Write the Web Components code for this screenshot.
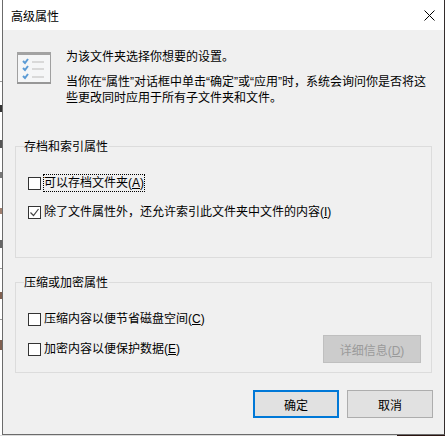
<!DOCTYPE html>
<html lang="zh">
<head>
<meta charset="utf-8">
<title>高级属性</title>
<style>
html, body { margin: 0; height: 100%; overflow: hidden; }
body {
	font: 12px "Liberation Sans", "Noto Sans CJK SC", sans-serif;
	color: #000;
	/* bits of the window behind the dialog, left strip and bottom row */
	background:
		linear-gradient(#999, #999) 0 81px / 2px 1px no-repeat,
		linear-gradient(#999, #999) 0 268px / 2px 1px no-repeat,
		linear-gradient(#999, #999) 0 319px / 2px 1px no-repeat,
		linear-gradient(#333, #333) 0 105px / 2px 7px no-repeat,
		linear-gradient(#555, #555) 0 140px / 2px 8px no-repeat,
		linear-gradient(#777, #777) 0 172px / 2px 6px no-repeat,
		linear-gradient(#a08070, #a08070) 0 208px / 2px 6px no-repeat,
		linear-gradient(#666, #666) 0 240px / 2px 8px no-repeat,
		linear-gradient(#806050, #806050) 0 292px / 2px 7px no-repeat,
		linear-gradient(#806050, #806050) 0 340px / 2px 10px no-repeat,
		linear-gradient(#2a1410, #2a1410) 397px 435px / 48px 1px no-repeat,
		linear-gradient(#dcdcdc, #dcdcdc) 0 435px / 397px 1px no-repeat,
		#fff;
}
</style>
</head>
<body>
<win-dialog caption="高级属性">
	<div slot="intro">
		<p>为该文件夹选择你想要的设置。</p>
		<p>当你在“属性”对话框中单击“确定”或“应用”时，系统会询问你是否将这些更改同时应用于所有子文件夹和文件。</p>
	</div>
	<group-box label="存档和索引属性" gap="11" style="height:112px">
		<check-option key="A" focused>可以存档文件夹</check-option>
		<check-option key="I" checked>除了文件属性外，还允许索引此文件夹中文件的内容</check-option>
	</group-box>
	<group-box label="压缩或加密属性" gap="12" style="height:91px;margin-top:24px">
		<check-option key="C">压缩内容以便节省磁盘空间</check-option>
		<div style="display:flex;justify-content:space-between;align-items:flex-start">
			<check-option key="E">加密内容以便保护数据</check-option>
			<win-button disabled key="D" style="width:98px;height:28px;margin:-5px 10px 0 0">详细信息</win-button>
		</div>
	</group-box>
	<win-button slot="actions" primary style="width:86px;height:28px">确定</win-button>
	<win-button slot="actions" style="width:86px;height:28px">取消</win-button>
</win-dialog>
<script>
class WinDialog extends HTMLElement {
	connectedCallback() {
		let shadow = this.attachShadow({mode: "open"});
		shadow.innerHTML = `
			<style>
				:host {
					display: flex;
					flex-direction: column;
					box-sizing: border-box;
					width: 443px;
					height: 435px;
					margin-left: 2px;
					border: 1px solid #6b6b6b;
					border-top: 0;
					border-right-color: #332c2c;
					background: #f0f0f0;
				}
				#title {
					display: flex;
					justify-content: space-between;
					align-items: center;
					height: 30px;
					padding: 0 9px 0 8px;
					background: #fff;
				}
				#title svg { width: 11px; height: 11px; }
				#body { flex: 1; padding: 19px 11px 0 12px; }
				#head { display: flex; height: 97px; }
				#head svg { width: 34px; height: 32px; margin: 3px 15px 0 2px; flex: none; }
				#actions { display: flex; justify-content: flex-end; gap: 8px; padding: 17px 0 0 0; }
				::slotted([slot=intro]) { line-height: 16px; }
			</style>
			<div id="title">
				<span>${this.getAttribute("caption")}</span>
				<svg viewBox="0 0 11 11"><path d="M.5.5l10 10M10.5.5l-10 10" stroke="#000" fill="none"/></svg>
			</div>
			<div id="body">
				<div id="head">
					<svg viewBox="0 0 34 32">
						<rect x=".5" y=".5" width="33" height="31" fill="#f5f6f7" stroke="#a0a0a0"/>
						<rect x="0" y="0" width="34" height="3" fill="#a3a3a3"/>
						<rect x="0" y="30" width="34" height="2" fill="#979797"/>
						<path d="M15 10h12M15 17h12M15 25h12" stroke="#cfcfcf" stroke-width="1.5"/>
						<path d="M6 9l2 2 3-4M6 16l2 2 3-4M6 24l2 2 3-4" stroke="#5b9bd5" stroke-width="2" fill="none"/>
					</svg>
					<slot name="intro"></slot>
				</div>
				<slot></slot>
				<div id="actions"><slot name="actions"></slot></div>
			</div>
		`;
		for (let p of this.querySelectorAll("p")) p.style.margin = "0 0 9px";
	}
}
customElements.define("win-dialog", WinDialog);

class GroupBox extends HTMLElement {
	connectedCallback() {
		let shadow = this.attachShadow({mode: "open"});
		shadow.innerHTML = `
			<style>
				:host {
					display: block;
					box-sizing: border-box;
					width: 417px;
					border: 1px solid #dcdcdc;
					position: relative;
				}
				#label {
					position: absolute;
					left: 8px;
					top: -8px;
					line-height: 16px;
					background: #f0f0f0;
					padding-right: 1px;
				}
				#content {
					display: flex;
					flex-direction: column;
					gap: ${this.getAttribute("gap")}px;
					padding: 27px 0 0 12px;
				}
			</style>
			<span id="label">${this.getAttribute("label")}</span>
			<div id="content"><slot></slot></div>
		`;
	}
}
customElements.define("group-box", GroupBox);

class CheckOption extends HTMLElement {
	connectedCallback() {
		let shadow = this.attachShadow({mode: "open"});
		let checked = this.hasAttribute("checked");
		let focused = this.hasAttribute("focused");
		shadow.innerHTML = `
			<style>
				:host { display: flex; align-items: flex-start; height: 18px; }
				#box {
					box-sizing: border-box;
					width: 13px;
					height: 13px;
					margin-top: 3px;
					border: 1px solid #333;
					background: #fff;
					flex: none;
					display: flex;
				}
				#box svg { width: 11px; height: 11px; }
				#text { margin-left: 2px; padding: 0 1px; line-height: 18px; white-space: nowrap; }
				#text.focused { outline: 1px dotted #000; outline-offset: -1px; }
				u { text-underline-offset: 1px; }
			</style>
			<span id="box">${checked ? '<svg viewBox="0 0 11 11"><path d="M1.5 5.5l3 3 5-6.5" stroke="#444" stroke-width="1.2" fill="none"/></svg>' : ""}</span>
			<span id="text" class="${focused ? "focused" : ""}"><slot></slot>(<u>${this.getAttribute("key")}</u>)</span>
		`;
	}
}
customElements.define("check-option", CheckOption);

class WinButton extends HTMLElement {
	connectedCallback() {
		let shadow = this.attachShadow({mode: "open"});
		let key = this.getAttribute("key");
		shadow.innerHTML = `
			<style>
				:host {
					display: flex;
					align-items: center;
					justify-content: center;
					box-sizing: border-box;
					flex: none;
					background: #e1e1e1;
					border: 1px solid #adadad;
				}
				:host([primary]) { border: 2px solid #0078d7; }
				:host([disabled]) { background: #cccccc; border-color: #bfbfbf; color: #9a9a9a; }
				u { text-underline-offset: 1px; }
			</style>
			<span><slot></slot>${key ? `(<u>${key}</u>)` : ""}</span>
		`;
	}
}
customElements.define("win-button", WinButton);
</script>
</body>
</html>
